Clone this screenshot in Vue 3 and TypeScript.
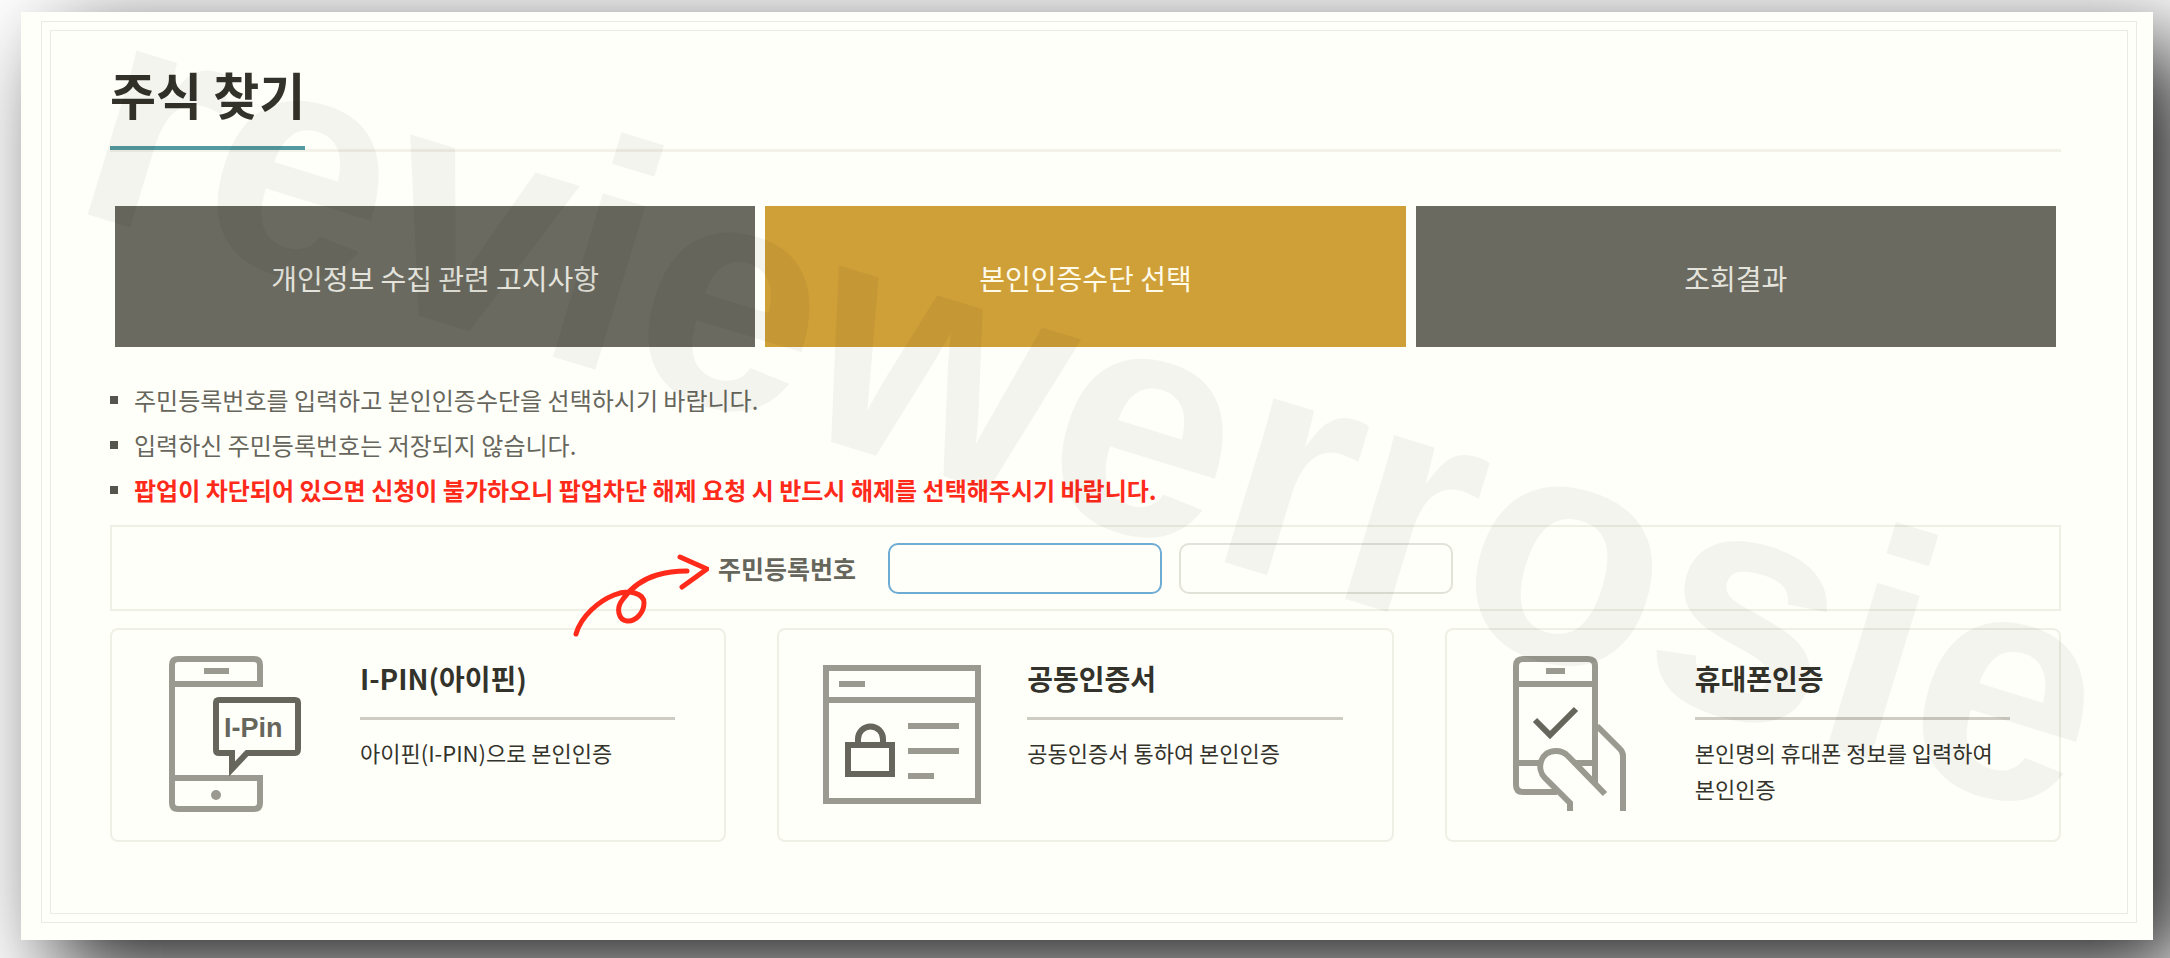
<script setup lang="ts">
interface Step { label: string; current: boolean }
interface Method { id: string; title: string; lines: string[] }

const steps: Step[] = [
  { label: '개인정보 수집 관련 고지사항', current: false },
  { label: '본인인증수단 선택', current: true },
  { label: '조회결과', current: false },
]

const notices = [
  { text: '주민등록번호를 입력하고 본인인증수단을 선택하시기 바랍니다.', alert: false },
  { text: '입력하신 주민등록번호는 저장되지 않습니다.', alert: false },
  { text: '팝업이 차단되어 있으면 신청이 불가하오니 팝업차단 해제 요청 시 반드시 해제를 선택해주시기 바랍니다.', alert: true },
]

const methods: Method[] = [
  { id: 'ipin', title: 'I-PIN(아이핀)', lines: ['아이핀(I-PIN)으로 본인인증'] },
  { id: 'cert', title: '공동인증서', lines: ['공동인증서 통하여 본인인증'] },
  { id: 'phone', title: '휴대폰인증', lines: ['본인명의 휴대폰 정보를 입력하여', '본인인증'] },
]
</script>

<template>
  <div class="backdrop">
    <main class="paper">
      <div class="frame">
        <div class="content">
          <header class="heading"><h1>주식 찾기</h1></header>

          <ol class="steps">
            <li v-for="s in steps" :key="s.label" :class="{ current: s.current }">{{ s.label }}</li>
          </ol>

          <ul class="notices">
            <li v-for="n in notices" :key="n.text" :class="{ alert: n.alert }">{{ n.text }}</li>
          </ul>

          <form class="rrn" @submit.prevent>
            <label for="rrn-front">주민등록번호</label>
            <input id="rrn-front" class="active" type="text" inputmode="numeric" maxlength="6">
            <input type="password" inputmode="numeric" maxlength="7" aria-label="주민등록번호 뒷자리">
            <svg class="arrow" viewBox="0 0 140 90" aria-hidden="true">
              <path d="M7 80C12 62 30 47 45 41C60 35 75 39 75 49C75 58 67 68 58 67C50 66 46 55 54 45C64 31 78 24 88 21C98 18 108 17 118 17" />
              <path d="M111 3L138 15L113 33" />
            </svg>
          </form>

          <div class="methods">
            <button v-for="m in methods" :key="m.id" type="button" class="card">
              <span class="picture">
                <svg v-if="m.id === 'ipin'" width="140" height="160" viewBox="0 0 140 160" aria-hidden="true">
                  <g fill="none" stroke="#9a9a90" stroke-width="6">
                    <path d="M94 32V10Q94 4 88 4H12Q6 4 6 10V148Q6 154 12 154H88Q94 154 94 148V123H6M97 29H6" />
                    <path d="M38 16H63" />
                  </g>
                  <circle cx="50" cy="140" r="5" fill="#9a9a90" />
                  <path d="M53 45H129Q132 45 132 48V94Q132 98 129 98H81L66 114V98H53Q50 98 50 95V48Q50 45 53 45Z" fill="none" stroke="#66665c" stroke-width="6" />
                  <text x="58" y="82">I-Pin</text>
                </svg>
                <svg v-else-if="m.id === 'cert'" width="160" height="160" viewBox="0 0 160 160" aria-hidden="true">
                  <g fill="none" stroke="#9a9a90" stroke-width="6">
                    <path d="M3 13H155V146H3ZM3 45H155M16 29H42M85 71H136M85 96H136M85 121H111" />
                  </g>
                  <path d="M25 90H69V119H25ZM35 89V84A12 12 0 0 1 60 84V89" fill="none" stroke="#66665c" stroke-width="6" />
                </svg>
                <svg v-else width="116" height="160" viewBox="0 0 116 160" aria-hidden="true">
                  <g fill="none" stroke="#9a9a90" stroke-width="6">
                    <path d="M44 137H10Q3 137 3 130V11Q3 4 10 4H75Q82 4 82 11V128M3 29H82M33 16H52M3 108H28M62 108H82" />
                    <path d="M57 156V148L32 123C23 114 27 96 43 96C48 96 52 98 55 101L92 139M84 71L107 94Q110 97 110 101V156" />
                  </g>
                  <path d="M22 65L37 80L63 54" fill="none" stroke="#66665c" stroke-width="6" />
                </svg>
              </span>
              <span class="info">
                <strong>{{ m.title }}</strong>
                <span class="desc"><span v-for="l in m.lines" :key="l">{{ l }}</span></span>
              </span>
            </button>
          </div>
        </div>
      </div>
    </main>
    <svg class="watermark" viewBox="0 0 2170 958" aria-hidden="true">
      <text transform="translate(66 208) rotate(17)">reviewerrosie</text>
    </svg>
  </div>
</template>

<style>
body { margin: 0; background: #fff; }
</style>

<style scoped>
* { box-sizing: border-box; }
.backdrop {
  position: relative;
  min-height: 100vh;
  padding: 12px 17px 18px 21px;
  font-family: "Noto Sans CJK KR", "Noto Sans", sans-serif;
  color: #33332b;
}
.paper {
  min-height: calc(100vh - 30px);
  padding: 9px 16px 17px 20px;
  background: #fffffa;
  box-shadow: 34px 32px 88px rgba(0, 0, 0, 0.88);
}
.frame {
  min-height: 902px;
  padding: 8px;
  border: 1px solid #ebebe1;
}
.content {
  min-height: 884px;
  padding: 24px 66px 70px 59px;
  border: 1px solid #ebebe1;
}
.heading { display: flex; border-bottom: 3px solid #f2f2e8; height: 97px; }
h1 {
  margin: 0;
  height: 95px;
  font-size: 50px;
  line-height: 76px;
  font-weight: 700;
  border-bottom: 4px solid #539aa0;
}
.steps {
  display: grid;
  grid-template-columns: repeat(3, 1fr);
  gap: 10px;
  margin: 54px 5px 0;
  padding: 0;
  list-style: none;
}
.steps li {
  height: 141px;
  font-size: 28px;
  line-height: 144px;
  text-align: center;
  color: #e4e4dd;
  background: #6a6a61;
}
.steps .current { color: #fffbe8; background: #cf9f38; }
.notices { margin: 30px 0 0; padding: 0; list-style: none; }
.notices li {
  display: flex;
  align-items: center;
  height: 45px;
  font-size: 24px;
  color: #66665c;
  white-space: nowrap;
}
.notices li::before {
  content: "";
  width: 8px;
  height: 8px;
  margin-right: 16px;
  background: #55554d;
}
.notices .alert { color: #ff2a1a; font-weight: 700; }
.rrn {
  position: relative;
  display: flex;
  justify-content: center;
  align-items: center;
  height: 86px;
  margin-top: 13px;
  border: 2px solid #efefe5;
}
.rrn label { margin-right: 32px; font-size: 25px; font-weight: 700; color: #66665c; }
.rrn input {
  width: 274px;
  height: 51px;
  margin-right: 17px;
  padding: 0 16px;
  font: inherit;
  font-size: 24px;
  border: 2px solid #e2e2d8;
  border-radius: 10px;
  background: transparent;
  outline: none;
}
.rrn input:last-of-type { margin-right: 0; }
.rrn .active { border-color: #6eacd3; }
.arrow {
  position: absolute;
  left: 457px;
  top: 27px;
  width: 140px;
  height: 90px;
  fill: none;
  stroke: #ff2a1a;
  stroke-width: 5;
  stroke-linecap: round;
  stroke-linejoin: round;
}
.methods {
  display: grid;
  grid-template-columns: repeat(3, 1fr);
  gap: 51px;
  margin-top: 17px;
}
.card {
  display: flex;
  min-height: 214px;
  padding: 25px 49px 23px 0;
  border: 2px solid #efefe5;
  border-radius: 8px;
  background: transparent;
  font: inherit;
  color: inherit;
  text-align: left;
}
.picture { display: flex; justify-content: center; flex: 0 0 248px; }
.picture text { font: 700 27px "Liberation Sans", sans-serif; fill: #66665c; }
.info { display: flex; flex-direction: column; flex: 1; }
.info strong {
  height: 65px;
  font-size: 28px;
  line-height: 46px;
  font-weight: 700;
  border-bottom: 3px solid #cdcdc4;
}
.desc { display: flex; flex-direction: column; margin-top: 14px; font-size: 22px; line-height: 36px; white-space: nowrap; }
.watermark { position: absolute; top: 0; left: 0; width: 100%; overflow: visible; pointer-events: none; }
.watermark text { font: 700 324px "Liberation Sans", sans-serif; fill: #000; fill-opacity: 0.043; }
</style>
